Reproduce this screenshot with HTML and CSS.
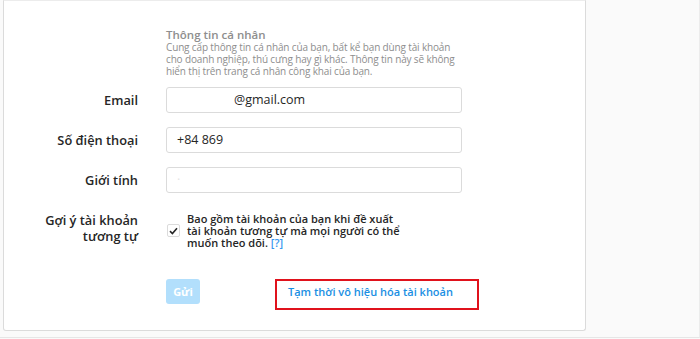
FILE: index.html
```html
<!DOCTYPE html>
<html lang="vi">
<head>
<meta charset="utf-8">
<link rel="stylesheet" href="styles.css">
</head>
<body>
<div class="page">
  <div class="card">
    <div class="row head">
      <div></div>
      <div>
        <div class="title">Thông tin cá nhân</div>
        <div class="desc">Cung cấp thông tin cá nhân của bạn, bất kể bạn dùng tài khoản cho doanh nghiệp, thú cưng hay gì khác. Thông tin này sẽ không hiển thị trên trang cá nhân công khai của bạn.</div>
      </div>
    </div>
    <div class="row field">
      <label class="lbl">Email</label>
      <div class="input"><span class="email">@gmail.com</span></div>
    </div>
    <div class="row field">
      <label class="lbl">Số điện thoại</label>
      <div class="input">+84 869</div>
    </div>
    <div class="row field">
      <label class="lbl">Giới tính</label>
      <div class="input"><span class="faint">·</span></div>
    </div>
    <div class="row check-row">
      <label class="lbl two">Gợi ý tài khoản<br>tương tự</label>
      <div class="check">
        <span class="box"><svg width="9" height="8" viewBox="0 0 9 8"><path d="M1 4.2 L3.4 6.5 L8 1.3" fill="none" stroke="#262626" stroke-width="1.6"/></svg></span>
        <span class="check-text">Bao gồm tài khoản của bạn khi đề xuất tài khoản tương tự mà mọi người có thể muốn theo dõi. <a class="help">[?]</a></span>
      </div>
    </div>
    <div class="row actions">
      <div></div>
      <div class="act">
        <button class="send">Gửi</button>
        <a class="deact">Tạm thời vô hiệu hóa tài khoản</a>
      </div>
    </div>
  </div>
</div>
</body>
</html>
```
FILE: styles.css
```css
html, body {
  margin: 0;
  padding: 0;
  background: #fafafa;
  font-family: "Open Sans", "Noto Sans", sans-serif;
}
.page {
  height: 338px;
  border-bottom: 1px solid #e6e6e6;
  border-right: 1px solid #ececec;
  box-sizing: border-box;
  width: 700px;
  overflow: hidden;
}
.card {
  margin-left: 3px;
  width: 583px;
  height: 331px;
  box-sizing: border-box;
  background: #fff;
  border: 1px solid #dbdbdb;
  border-top-color: #ececec;
  border-radius: 0 0 3px 3px;
  padding-top: 27px;
}
.row {
  display: grid;
  grid-template-columns: 134px 296px;
  column-gap: 28px;
  align-items: center;
}
.title {
  font-size: 11.5px;
  line-height: 13px;
  font-weight: 600;
  color: #8e8e8e;
}
.desc {
  font-size: 10px;
  line-height: 11.8px;
  color: #8e8e8e;
  width: 290px;
  letter-spacing: -0.15px;
  margin-top: 1px;
}
.field { margin-top: 14px; }
.head + .field { margin-top: 10px; }
.lbl {
  text-align: right;
  font-size: 12.8px;
  font-weight: 600;
  color: #262626;
}
.input {
  height: 26px;
  box-sizing: border-box;
  border: 1px solid #dbdbdb;
  border-radius: 3px;
  padding: 0 10px;
  font-size: 12.5px;
  line-height: 24px;
  color: #262626;
  background: #fff;
}
.email { margin-left: 57px; }
.faint { color: #e4e4e4; }
.check-row {
  margin-top: 20px;
  align-items: start;
}
.two {
  line-height: 15.7px;
  margin-top: -0.5px;
}
.check {
  display: flex;
  align-items: flex-start;
  gap: 7px;
  margin-left: 1px;
}
.box {
  flex: none;
  width: 13px;
  height: 13px;
  box-sizing: border-box;
  border: 1px solid #dbdbdb;
  border-radius: 2px;
  margin-top: 11px;
  display: flex;
  align-items: center;
  justify-content: center;
}
.check-text {
  font-size: 11px;
  line-height: 11.8px;
  font-weight: 600;
  color: #262626;
  width: 214px;
}
.help { color: #3897f0; }
.actions { margin-top: 30px; align-items: start; }
.act {
  display: flex;
  align-items: flex-start;
}
.send {
  flex: none;
  width: 34px;
  height: 25px;
  border: 0;
  border-radius: 3px;
  background: #b2dffc;
  color: #fff;
  font-family: inherit;
  font-size: 11px;
  font-weight: 700;
  padding: 0;
}
.deact {
  display: block;
  flex: none;
  margin-left: 75px;
  width: 204px;
  height: 31px;
  box-sizing: border-box;
  border: 2px solid #e0121c;
  padding: 4px 0 0 11px;
  font-size: 11px;
  line-height: 14px;
  font-weight: 600;
  color: #1a8fe3;
}
```
